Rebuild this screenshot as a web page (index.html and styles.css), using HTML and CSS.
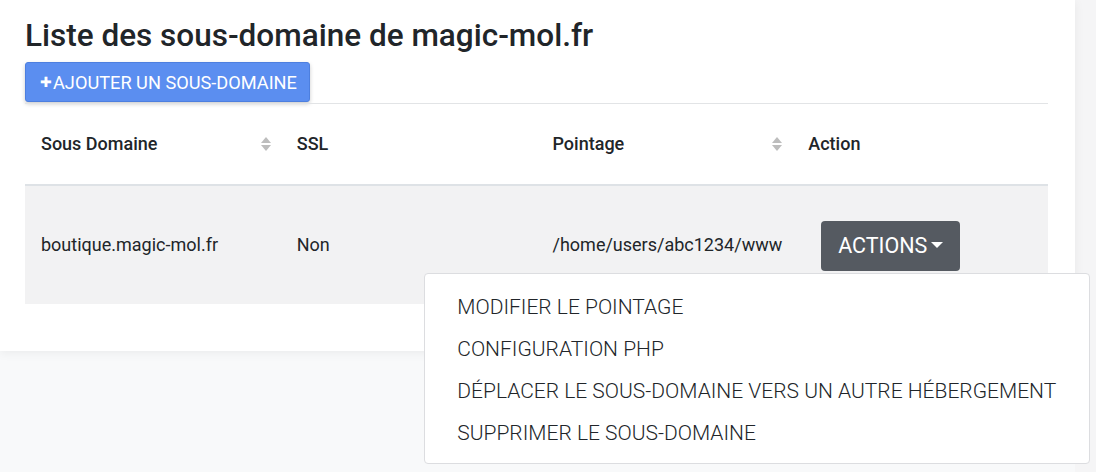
FILE: index.html
```html
<!DOCTYPE html>
<html lang="fr">
<head>
<meta charset="utf-8">
<title>Sous-domaines</title>
<link rel="stylesheet" href="styles.css">
</head>
<body>
<div class="page">
  <section class="card">
    <h1 class="title">Liste des sous-domaine de magic-mol.fr</h1>
    <button class="btn-add" type="button"><span class="plus">✚</span>AJOUTER UN SOUS-DOMAINE</button>
    <table class="grid">
      <thead>
        <tr>
          <th><div class="th-in">Sous Domaine<span class="sort"></span></div></th>
          <th><div class="th-in">SSL</div></th>
          <th><div class="th-in">Pointage<span class="sort"></span></div></th>
          <th><div class="th-in">Action</div></th>
        </tr>
      </thead>
      <tbody>
        <tr>
          <td>boutique.magic-mol.fr</td>
          <td>Non</td>
          <td>/home/users/abc1234/www</td>
          <td>
            <div class="dd">
              <button class="btn-actions" type="button">ACTIONS<span class="caret"></span></button>
              <ul class="menu">
                <li>MODIFIER LE POINTAGE</li>
                <li>CONFIGURATION PHP</li>
                <li>DÉPLACER LE SOUS-DOMAINE VERS UN AUTRE HÉBERGEMENT</li>
                <li>SUPPRIMER LE SOUS-DOMAINE</li>
              </ul>
            </div>
          </td>
        </tr>
      </tbody>
    </table>
  </section>
  <div class="strip"></div>
</div>
</body>
</html>
```
FILE: styles.css
```css
* { box-sizing: border-box; }
html, body { margin: 0; padding: 0; }
body {
  background: #f8f9fa;
  font-family: Roboto, "Liberation Sans", Arial, sans-serif;
  color: #212529;
  width: 1096px;
  height: 472px;
  overflow: hidden;
}
.page {
  display: flex;
  align-items: flex-start;
}
.card {
  width: 1075px;
  background: #ffffff;
  padding: 18px 27px 47px 25px;
  box-shadow: 0 2px 10px rgba(0, 0, 0, 0.06);
  position: relative;
  z-index: 1;
}
.strip {
  width: 21px;
  height: 472px;
  background: #f5f5f6;
}
.title {
  margin: 0 0 8px 0;
  font-size: 31.5px;
  line-height: 36px;
  font-weight: 500;
  color: #212529;
  letter-spacing: 0;
}
.btn-add {
  display: flex;
  align-items: center;
  height: 40px;
  padding: 0 12px 0 14px;
  background: #5b8ef0;
  border: 1px solid #4d7fdf;
  border-radius: 3px;
  color: #ffffff;
  font-family: Roboto, "Liberation Sans", Arial, sans-serif;
  font-size: 18.2px;
  font-weight: 400;
  box-shadow: 0 2px 4px rgba(0, 0, 0, 0.2);
  margin: 0 0 1px 0;
}
.plus {
  font-size: 14px;
  margin-right: 1px;
}
.grid {
  width: 100%;
  border-collapse: collapse;
  table-layout: fixed;
  border-top: 1px solid #e2e4e6;
}
.grid th {
  height: 81px;
  padding: 0 16px;
  text-align: left;
  font-size: 18px;
  font-weight: 500;
  border-bottom: 2px solid #dee2e6;
  vertical-align: middle;
}
.th-in {
  display: flex;
  align-items: center;
  justify-content: space-between;
}
.sort {
  width: 10px;
  height: 16px;
  display: flex;
  flex-direction: column;
  justify-content: center;
  gap: 2px;
  margin-right: -6px;
}
.sort::before, .sort::after {
  content: "";
  width: 0;
  height: 0;
  border-left: 5px solid transparent;
  border-right: 5px solid transparent;
}
.sort::before { border-bottom: 6px solid #bdbdbd; }
.sort::after { border-top: 6px solid #bdbdbd; }
.grid td {
  height: 119px;
  padding: 0 16px;
  background: #f2f2f3;
  font-size: 18px;
  font-weight: 400;
  vertical-align: middle;
}
.dd {
  position: relative;
  margin: 2px 0 0 13px;
  width: 139px;
}
.btn-actions {
  display: flex;
  align-items: center;
  justify-content: center;
  width: 139px;
  height: 50px;
  background: #555a61;
  color: #ffffff;
  border: none;
  border-radius: 4px;
  font-family: Roboto, "Liberation Sans", Arial, sans-serif;
  font-size: 21.5px;
  padding: 0;
}
.caret {
  width: 0;
  height: 0;
  border-left: 6px solid transparent;
  border-right: 6px solid transparent;
  border-top: 6px solid #ffffff;
  margin-left: 4px;
  margin-top: -2px;
}
.menu {
  position: absolute;
  top: 52px;
  left: -397px;
  width: 666px;
  height: 191px;
  margin: 0;
  padding: 12px 0 0 0;
  list-style: none;
  background: #ffffff;
  border: 1px solid #dcdde0;
  border-radius: 4px;
  z-index: 5;
}
.menu li {
  height: 42px;
  line-height: 42px;
  padding-left: 32px;
  font-size: 21px;
  font-weight: 300;
  color: #212529;
  white-space: nowrap;
}
```
